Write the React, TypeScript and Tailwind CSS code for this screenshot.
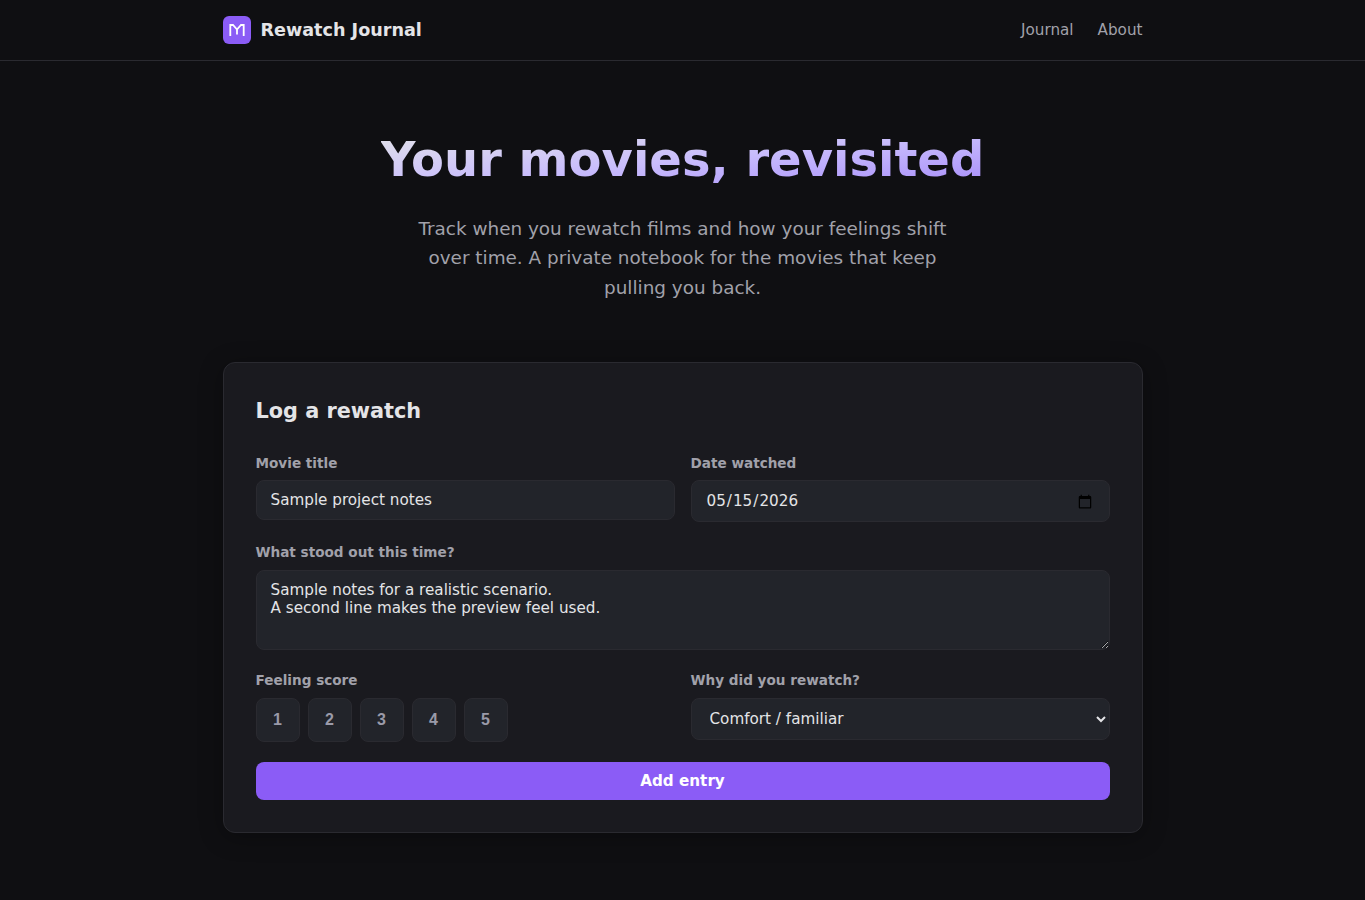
const dejavu = "font-['DejaVu_Sans',sans-serif]";

function Logo() {
  return (
    <div className="w-7 h-7 rounded-md bg-[#8b5cf6] flex items-center justify-center">
      <svg width="18" height="18" viewBox="0 0 18 18" fill="none" stroke="white" strokeWidth="1.8">
        <path d="M2.300 15V4h2.700L9 8.500 13 4h2.700v11" />
        <path d="M9 8.500V13.500" />
      </svg>
    </div>
  );
}

function Label({ children }: { children: React.ReactNode }) {
  return <label className="block text-[13.6px] leading-[16px] font-bold text-[#a1a1aa] mb-[9.2px]">{children}</label>;
}

export default function App() {
  return (
    <div className={`min-h-[900px] bg-[#0f0f12] text-[#e4e4e7] ${dejavu}`}>
      <header className="h-[61px] border-b border-[#2a2a30]">
        <div className="max-w-[920px] h-full mx-auto flex items-center justify-between">
          <div className="flex items-center gap-[10px]">
            <Logo />
            <span className="text-[17.6px] font-bold">Rewatch Journal</span>
          </div>
          <nav className="flex gap-6 text-[15.2px] text-[#a1a1aa]">
            <a>Journal</a>
            <a>About</a>
          </nav>
        </div>
      </header>

      <section className="pt-[70px] pb-[59.8px] text-center">
        <h1 className="text-[48px] leading-[1.2] font-bold mb-[25.3px] bg-gradient-to-br from-[#e4e4e7] via-[#c9bdfc] to-[#a78bfa] bg-clip-text text-transparent w-fit mx-auto">
          Your movies, revisited
        </h1>
        <p className="max-w-[560px] mx-auto text-[18.4px] leading-[29.44px] text-[#a1a1aa]">
          Track when you rewatch films and how your feelings shift over time. A private notebook for the movies that keep pulling you back.
        </p>
      </section>

      <main className="max-w-[920px] mx-auto rounded-xl border border-[#2a2a30] bg-[#1a1a1f] p-8 shadow-[0_4px_24px_rgba(0,0,0,0.3)]">
        <h2 className="text-[20.8px] leading-[32px] font-bold mb-[28.2px]">Log a rewatch</h2>
        <div className="grid grid-cols-2 gap-4 mb-[22px] items-start">
          <div>
            <Label>Movie title</Label>
            <input
              defaultValue="Sample project notes"
              className="w-full h-10 px-[14px] rounded-lg border border-[#2a2a30] bg-[#22242a] text-[15.2px] text-[#e4e4e7] outline-none"
            />
          </div>
          <div>
            <Label>Date watched</Label>
            <input
              type="date"
              defaultValue="2026-05-15"
              className="w-full h-[42px] px-[14px] rounded-lg border border-[#2a2a30] bg-[#22242a] text-[15.2px] text-[#e4e4e7] outline-none"
            />
          </div>
        </div>
        <div className="mb-[22.8px]">
          <Label>What stood out this time?</Label>
          <textarea
            defaultValue={"Sample notes for a realistic scenario.\nA second line makes the preview feel used."}
            className="block w-full h-20 px-[14px] py-[10px] rounded-lg border border-[#2a2a30] bg-[#22242a] text-[15.2px] leading-[18px] text-[#e4e4e7] outline-none"
          />
        </div>
        <div className="grid grid-cols-2 gap-4 mb-[20.4px]">
          <div>
            <Label>Feeling score</Label>
            <div className="flex gap-2">
              {[1, 2, 3, 4, 5].map((n) => (
                <button
                  key={n}
                  className="w-11 h-11 rounded-lg border border-[#2a2a30] bg-[#22242a] text-[16px] font-bold text-[#9a9aa8] font-['Liberation_Sans',sans-serif]"
                >
                  {n}
                </button>
              ))}
            </div>
          </div>
          <div>
            <Label>Why did you rewatch?</Label>
            <select className="w-full h-[42px] px-[14px] rounded-lg border border-[#2a2a30] bg-[#22242a] text-[15.2px] text-[#e4e4e7] outline-none">
              <option>Comfort / familiar</option>
            </select>
          </div>
        </div>
        <button className="w-full h-[38px] rounded-lg bg-[#8b5cf6] text-white text-[15.2px] font-bold">Add entry</button>
      </main>
    </div>
  );
}
